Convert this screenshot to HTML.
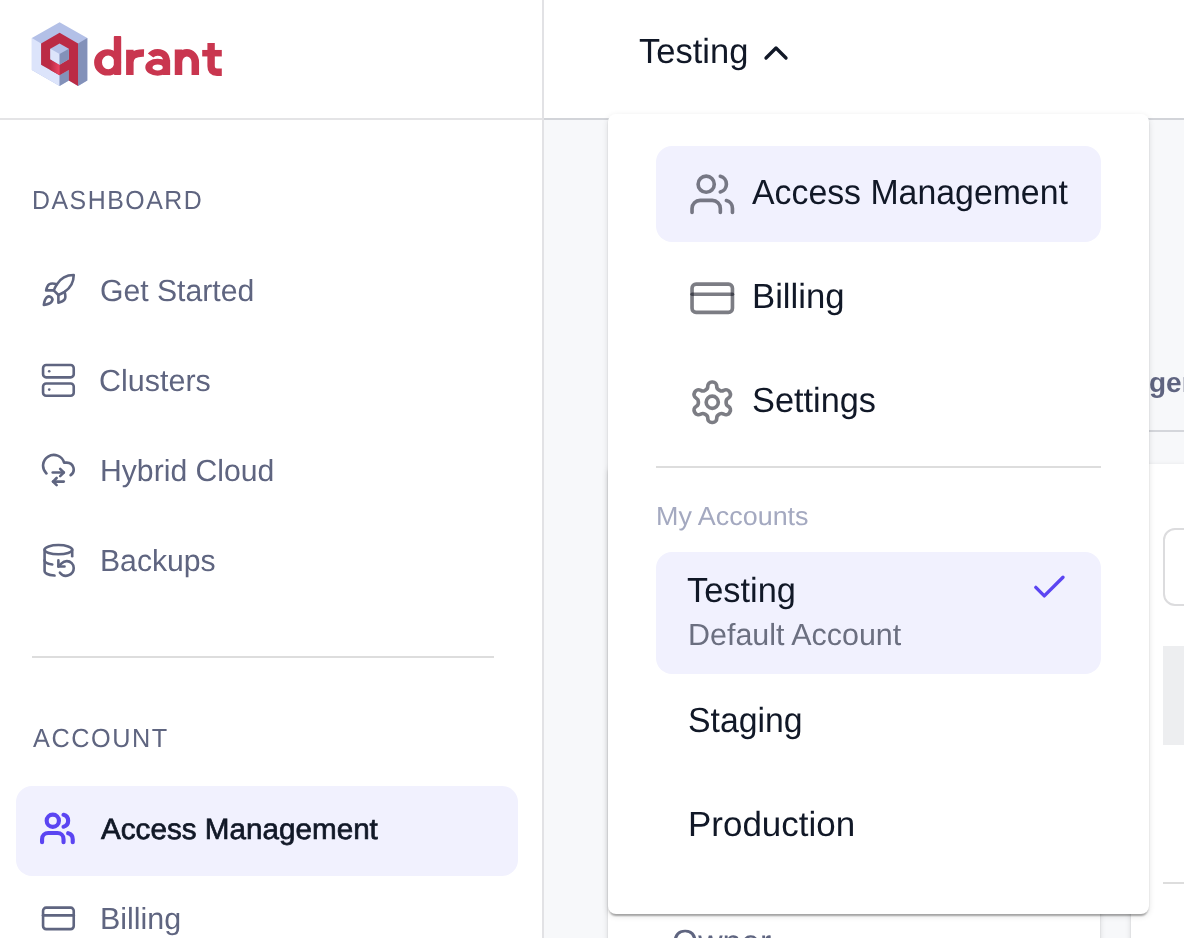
<!DOCTYPE html>
<html lang="en">
<head>
<meta charset="utf-8">
<title>Qdrant Cloud</title>
<style>
*{box-sizing:border-box;margin:0;padding:0}
html,body{width:1184px;height:938px;overflow:hidden;background:#fff}
body{position:relative;font-family:"Liberation Sans",sans-serif;color:#111827}
.abs{position:absolute}
.t{position:absolute;white-space:nowrap;line-height:1;will-change:opacity;text-rendering:geometricPrecision;transform-origin:0 0;transform:scaleX(var(--k,1))}
.nav{color:#5f6580}
.ico{position:absolute;fill:none;stroke-linecap:round;stroke-linejoin:round}
.side{stroke:#5f6580;stroke-width:1.7;width:36.8px;height:36.8px;left:39.6px;margin-top:.8px}
.dd{stroke:rgba(22,24,36,.56);stroke-width:1.8;width:48.5px;height:48.5px;left:687.8px}
</style>
</head>
<body>

<!-- main area background -->
<div class="abs" style="left:544px;top:120px;width:640px;height:818px;background:#f7f8fa"></div>

<!-- header -->
<div class="abs" style="left:0;top:118px;width:544px;height:2px;background:#e4e4e6"></div>
<div class="abs" style="left:544px;top:118px;width:640px;height:2px;background:#d2d4d9"></div>
<!-- sidebar border -->
<div class="abs" style="left:542px;top:0;width:2px;height:938px;background:#e2e2e5"></div>

<!-- page content behind dropdown -->
<div class="t" style="left:1149px;top:368.7px;font-size:28px;font-weight:bold;color:#5f6480">gement</div>
<div class="abs" style="left:608px;top:430px;width:576px;height:2px;background:#d4d6db"></div>
<!-- left card -->
<div class="abs" style="left:608px;top:463.5px;width:491.5px;height:500px;background:#fff;border-radius:8px;box-shadow:0 4px 2px -2px rgba(0,0,0,.2),0 2px 2px 0 rgba(0,0,0,.14),0 2px 6px 0 rgba(0,0,0,.12)"></div>
<div class="t" id="owner" style="--k:.965;left:672.1px;top:926.1px;font-size:34.9px;color:#5f6580">Owner</div>
<!-- right card -->
<div class="abs" style="left:1131px;top:463.5px;width:80px;height:500px;background:#fff;border-radius:8px;box-shadow:0 4px 2px -2px rgba(0,0,0,.2),0 2px 2px 0 rgba(0,0,0,.14),0 2px 6px 0 rgba(0,0,0,.12)"></div>
<div class="abs" style="left:1163px;top:528px;width:60px;height:77.5px;border:2px solid #dcdcde;border-radius:12px;background:#fff"></div>
<div class="abs" style="left:1163px;top:646px;width:40px;height:99px;background:#edeef0"></div>
<div class="abs" style="left:1163px;top:882px;width:40px;height:2px;background:#dddddd"></div>

<!-- ================= SIDEBAR ================= -->
<svg class="abs" style="left:0;top:0" width="240" height="110" viewBox="0 0 240 110">
<defs><linearGradient id="lg" x1="50.34" x2="59.58" y1="0" y2="0" gradientUnits="userSpaceOnUse"><stop offset="0" stop-color="#bb2b45"/><stop offset="1" stop-color="#ee4664"/></linearGradient></defs>
<polygon fill="#b3c0e7" points="59.58,22.17 87.30,38.10 87.30,80.58 78.06,85.89 68.82,80.58 59.58,85.89 31.86,69.96 31.86,38.10"/>
<polygon fill="#dce4fb" points="31.86,38.10 41.10,43.41 41.10,64.65 59.58,75.27 59.58,85.89 31.86,69.96"/>
<polygon fill="#8391b9" points="87.30,38.10 87.30,80.58 78.06,85.89 78.06,43.41"/>
<polygon fill="#8391b9" points="59.58,75.27 68.82,69.96 68.82,80.58 59.58,85.89"/>
<polygon fill="#bb2b45" points="59.58,32.79 78.06,43.41 78.06,85.89 68.82,80.58 68.82,69.96 59.58,75.27 41.10,64.65 41.10,43.41"/>
<polygon fill="url(#lg)" points="50.34,59.34 59.58,64.65 59.58,75.27 50.34,69.96"/>
<polygon fill="#b3c0e7" points="59.58,43.41 68.82,48.72 68.82,59.34 59.58,64.65 50.34,59.34 50.34,48.72"/>
<polygon fill="#dce4fb" points="50.34,48.72 59.58,54.03 59.58,64.65 50.34,59.34"/>
<polygon fill="#8391b9" points="59.58,54.03 68.82,48.72 68.82,59.34 59.58,64.65"/>
<g fill="#c9364f" fill-rule="evenodd">
<path d="M94.1 62.4a13.5 13.2 0 1 0 27 0a13.5 13.2 0 1 0 -27 0zM102 62.4a6.2 6.8 0 1 1 12.4 0a6.2 6.8 0 1 1 -12.4 0z"/><path d="M145.3 67.3a12.3 8.45 0 1 0 24.6 0a12.3 8.45 0 1 0 -24.6 0zM152.5 67.4a5.2 3 0 1 1 10.4 0a5.2 3 0 1 1 -10.4 0z"/><rect x="113.8" y="36.1" width="7.4" height="38.8" rx=".8"/>
</g>
<g fill="none" stroke="#c9364f" stroke-width="7.5">
<path d="M129.85 49.8V74.9M129.85 62.5C129.85 56 134.5 52.6 144 52.9"/>
<path d="M150.6 55.6C152.2 53.4 154.6 52.3 157.6 52.3C163.6 52.3 166.5 56 166.5 61V74.9" stroke-width="6.8"/><path d="M166.5 60V74.9" stroke-width="7.3"/>
<path d="M178.5 49.6V74.9M178.5 62.2A8.4 9.4 0 0 1 195.3 62.2V74.9"/>
<path d="M211.1 43V66.3Q211.1 72.2 217 72.2H221.8" stroke-width="7.4"/><path d="M202.2 53.2H221.8" stroke-width="6.5"/>
</g>
</svg>

<div class="t nav" id="t1" style="--k:0.9500;left:31.90px;top:186.80px;font-size:26.2px;letter-spacing:1.6px">DASHBOARD</div>

<div class="t nav" id="t2" style="--k:0.9889;left:99.50px;top:275.50px;font-size:30.5px">Get Started</div>
<div class="t nav" id="t3" style="--k:0.9992;left:99.20px;top:366.10px;font-size:30.5px">Clusters</div>
<div class="t nav" id="t4" style="--k:0.9892;left:100.00px;top:456.20px;font-size:30.5px">Hybrid Cloud</div>
<div class="t nav" id="t5" style="--k:0.9888;left:100.00px;top:546.20px;font-size:30.5px">Backups</div>

<div class="abs" style="left:32px;top:656px;width:462px;height:2px;background:#dddddd"></div>

<div class="t nav" id="t6" style="--k:0.9644;left:33.20px;top:724.80px;font-size:26.2px;letter-spacing:1.6px">ACCOUNT</div>

<div class="abs" style="left:16px;top:786px;width:502px;height:90px;border-radius:16px;background:#f1f1fe"></div>
<div class="t" id="t7" style="--k:1.0120;left:100.9px;top:814.70px;font-size:29.3px;-webkit-text-stroke:.7px #111827">Access Management</div>
<div class="t nav" id="t8" style="--k:0.9982;left:99.90px;top:904.00px;font-size:30.5px">Billing</div>

<!-- sidebar icons -->
<svg class="ico side" viewBox="0 0 24 24" style="top:271.1px"><path d="M4.5 16.5c-1.5 1.26-2 5-2 5s3.74-.5 5-2c.71-.84.7-2.13-.09-2.91a2.18 2.18 0 0 0-2.91-.09z"/><path d="m12 15-3-3a22 22 0 0 1 2-3.95A12.88 12.88 0 0 1 22 2c0 2.72-.78 7.5-6 11a22.35 22.35 0 0 1-4 2z"/><path d="M9 12H4s.55-3.03 2-4c1.62-1.08 5 0 5 0"/><path d="M12 15v5s3.03-.55 4-2c1.08-1.62 0-5 0-5"/></svg>
<svg class="ico side" viewBox="0 0 24 24" style="top:361.1px"><rect width="20" height="8" x="2" y="2" rx="2" ry="2"/><rect width="20" height="8" x="2" y="14" rx="2" ry="2"/><line x1="6" x2="6.01" y1="6" y2="6"/><line x1="6" x2="6.01" y1="18" y2="18"/></svg>
<svg class="ico side" viewBox="0 0 24 24" style="top:451px"><path d="M4.2 14A7 7 0 1 1 15.71 6.9h1.79a4.5 4.5 0 0 1 2.5 8.2"/><path d="M8.3 13.35h7.2"/><path d="m13.15 11 2.35 2.35-2.35 2.35"/><path d="M15.5 19.3H8.5"/><path d="m10.85 16.95-2.35 2.35 2.35 2.35"/></svg>
<svg class="ico side" viewBox="0 0 24 24" style="top:541.1px"><ellipse cx="12" cy="5" rx="9" ry="3"/><path d="M3 12a9 3 0 0 0 5 2.69"/><path d="M21 9.3V5"/><path d="M3 5v14a9 3 0 0 0 6.47 2.88"/><path d="M12 12v4h4"/><path d="M13 20a5 5 0 0 0 9-3 4.5 4.5 0 0 0-4.5-4.5c-1.33 0-2.54.54-3.41 1.41L12 16"/></svg>
<svg class="ico side" viewBox="0 0 24 24" style="top:809.0px;left:39.2px;stroke:#5b45f2;stroke-width:2.7"><path d="M16 21v-2a4 4 0 0 0-4-4H6a4 4 0 0 0-4 4v2"/><circle cx="9" cy="7" r="4"/><path d="M22 21v-2a4 4 0 0 0-3-3.87"/><path d="M16 3.13a4 4 0 0 1 0 7.75"/></svg>
<svg class="ico side" viewBox="0 0 24 24" style="top:898.9px"><rect width="20" height="14" x="2" y="5" rx="2"/><line x1="2" x2="22" y1="10" y2="10"/></svg>

<!-- ================= HEADER ================= -->
<div class="t" id="t9" style="--k:0.9894;left:639.00px;top:35.00px;font-size:34.9px">Testing</div>

<svg class="ico " viewBox="0 0 24 24" style="left:756px;top:32.5px;width:40px;height:40px;stroke:#111827;stroke-width:2"><path d="m18 15-6-6-6 6"/></svg>

<!-- ================= DROPDOWN ================= -->
<div class="abs" id="menu" style="left:608px;top:113.5px;width:541px;height:800px;background:#fff;border-radius:8px;box-shadow:0 4px 2px -2px rgba(0,0,0,.2),0 2px 2px 0 rgba(0,0,0,.14),0 2px 6px 0 rgba(0,0,0,.12)"></div>

<div class="abs" style="left:656px;top:146px;width:445px;height:95.5px;border-radius:16px;background:#f1f1fe"></div>
<div class="t" id="t10" style="--k:0.9696;left:752.20px;top:176.20px;font-size:34.9px">Access Management</div>
<div class="t" id="t11" style="--k:0.9948;left:752.10px;top:280.00px;font-size:34.9px">Billing</div>
<div class="t" id="t12" style="--k:0.9833;left:751.80px;top:384.30px;font-size:34.9px">Settings</div>

<div class="abs" style="left:656px;top:466px;width:445px;height:2px;background:#dddddd"></div>

<div class="t" id="t13" style="--k:1.0275;left:655.60px;top:503.00px;font-size:26.2px;color:#a4a9c0">My Accounts</div>

<div class="abs" style="left:656px;top:552px;width:445px;height:122px;border-radius:16px;background:#f1f1fe"></div>
<div class="t" id="t14" style="--k:0.9855;left:686.70px;top:574.00px;font-size:34.9px">Testing</div>
<div class="t" id="t15" style="--k:0.9982;left:688.00px;top:620.00px;font-size:30.5px;color:#6b6f80">Default Account</div>
<div class="t" id="t16" style="--k:0.9690;left:688.20px;top:704.30px;font-size:34.9px">Staging</div>
<div class="t" id="t17" style="--k:1.0021;left:688.10px;top:807.50px;font-size:34.9px">Production</div>

<!-- dropdown icons -->
<svg class="ico dd" viewBox="0 0 24 24" style="top:169.7px"><path d="M16 21v-2a4 4 0 0 0-4-4H6a4 4 0 0 0-4 4v2"/><circle cx="9" cy="7" r="4"/><path d="M22 21v-2a4 4 0 0 0-3-3.87"/><path d="M16 3.13a4 4 0 0 1 0 7.75"/></svg>
<svg class="ico dd" viewBox="0 0 24 24" style="top:273.6px"><rect width="20" height="14" x="2" y="5" rx="2"/><line x1="2" x2="22" y1="10" y2="10"/></svg>
<svg class="ico dd" viewBox="0 0 24 24" style="top:377.7px"><path d="M12.22 2h-.44a2 2 0 0 0-2 2v.18a2 2 0 0 1-1 1.73l-.43.25a2 2 0 0 1-2 0l-.15-.08a2 2 0 0 0-2.73.73l-.22.38a2 2 0 0 0 .73 2.73l.15.1a2 2 0 0 1 1 1.72v.51a2 2 0 0 1-1 1.74l-.15.09a2 2 0 0 0-.73 2.73l.22.38a2 2 0 0 0 2.73.73l.15-.08a2 2 0 0 1 2 0l.43.25a2 2 0 0 1 1 1.73V20a2 2 0 0 0 2 2h.44a2 2 0 0 0 2-2v-.18a2 2 0 0 1 1-1.73l.43-.25a2 2 0 0 1 2 0l.15.08a2 2 0 0 0 2.73-.73l.22-.39a2 2 0 0 0-.73-2.73l-.15-.08a2 2 0 0 1-1-1.74v-.5a2 2 0 0 1 1-1.74l.15-.09a2 2 0 0 0 .73-2.73l-.22-.38a2 2 0 0 0-2.73-.73l-.15.08a2 2 0 0 1-2 0l-.43-.25a2 2 0 0 1-1-1.73V4a2 2 0 0 0-2-2z"/><circle cx="12" cy="12" r="3"/></svg>
<svg class="ico " viewBox="0 0 24 24" style="left:1028.6px;top:567.3px;width:40.8px;height:40.8px;stroke:#5b45f2;stroke-width:2"><path d="M20 6 9 17l-5-5"/></svg>

</body>
</html>
